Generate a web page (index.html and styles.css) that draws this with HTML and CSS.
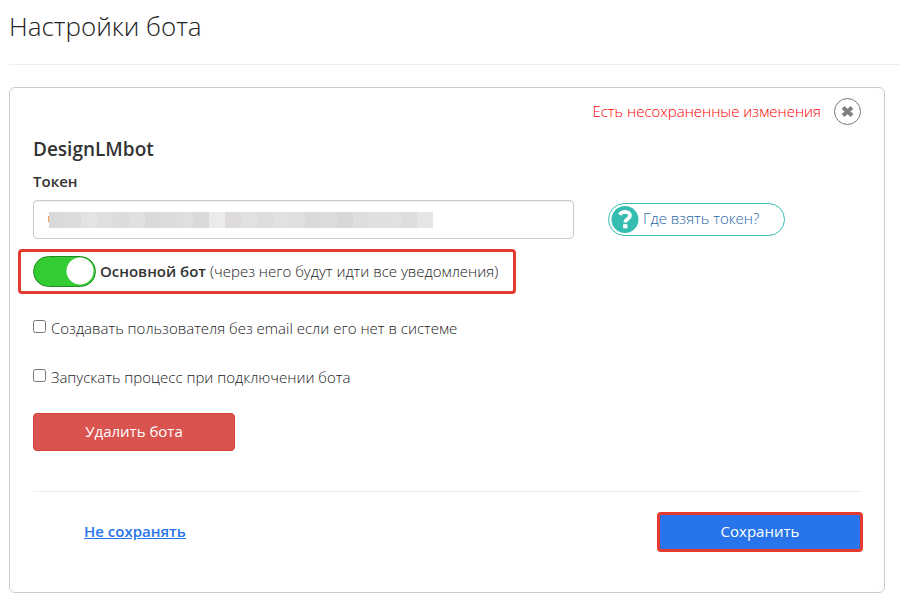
FILE: index.html
```html
<!DOCTYPE html>
<html lang="ru">
<head>
  <meta charset="UTF-8" />
  <meta name="viewport" content="width=device-width, initial-scale=1.0"/>
  <title>Настройки бота</title>
  <link rel="stylesheet" href="styles.css">
</head>
<body>
  <h1 class="page-title">Настройки бота</h1>

  <form class="card">
    <div class="card-top">
      <span class="unsaved">Есть несохраненные изменения</span>
      <button type="button" class="close" aria-label="Закрыть">
        <svg width="13" height="13" viewBox="0 0 13 13">
          <path d="M2 2.5 L11 10.5 M11 2.5 L2 10.5" stroke="#808080" stroke-width="4" fill="none"/>
        </svg>
      </button>
    </div>

    <h2 class="bot-name">DesignLMbot</h2>

    <label class="field-label" for="token">Токен</label>
    <div class="token-row">
      <input type="text" id="token" class="input-field" />
      <a href="#" class="help">
        <svg width="28" height="28" viewBox="0 0 28 28">
          <circle cx="14" cy="13.5" r="13.5" fill="#34bdb0"/>
          <path d="M8.6 8.7 C10 6.5 11.8 5.8 14 5.8 C17.2 5.8 19 7.5 19 9.7 C19 12.9 14.3 12.7 14.3 16.5" stroke="#fff" stroke-width="3.8" fill="none"/>
          <rect x="12.2" y="18.2" width="4.2" height="4.2" fill="#fff"/>
        </svg>
        <span class="help-text">Где взять токен?</span>
      </a>
    </div>

    <div class="main-bot">
      <input type="checkbox" id="mainBot" class="toggle" checked />
      <label for="mainBot"><b>Основной бот</b> (через него будут идти все уведомления)</label>
    </div>

    <div class="checks">
      <div class="check-row">
        <input type="checkbox" id="createUser" class="check" />
        <label for="createUser">Создавать пользователя без email если его нет в системе</label>
      </div>
      <div class="check-row">
        <input type="checkbox" id="startProcess" class="check" />
        <label for="startProcess">Запускать процесс при подключении бота</label>
      </div>
    </div>

    <button type="button" class="button button-delete">Удалить бота</button>

    <div class="card-footer">
      <a href="#" class="cancel">Не сохранять</a>
      <button type="submit" class="button button-save">Сохранить</button>
    </div>
  </form>
</body>
</html>
```
FILE: styles.css
```css
* {
  box-sizing: border-box;
}

body {
  font-family: "Open Sans", "Noto Sans", sans-serif;
  font-size: 15px;
  font-weight: 300;
  line-height: 20px;
  color: #222;
  background-color: #fff;
  margin: 0;
  padding: 8px 0 9px 9px;
}

.page-title {
  margin: 0 0 22px;
  padding-bottom: 20px;
  border-bottom: 1px solid #eee;
  font-size: 26px;
  font-weight: 300;
  line-height: 36px;
}

.card {
  margin-right: 15px;
  padding: 10px 23px 40px;
  border: 1px solid #ccc;
  border-radius: 6px;
}

.card-top {
  display: flex;
  justify-content: flex-end;
  align-items: center;
  gap: 13px;
}

.unsaved {
  padding-bottom: 2px;
  color: #f00;
}

.close {
  display: flex;
  align-items: center;
  justify-content: center;
  width: 27px;
  height: 27px;
  padding: 0;
  border: 1px solid #777;
  border-radius: 50%;
  background: #fff;
  cursor: pointer;
}

.bot-name {
  margin: 12px 0 10px;
  color: #333;
  font-size: 19px;
  font-weight: 600;
  line-height: 24px;
}

.field-label {
  display: block;
  margin-bottom: 9px;
  color: #333;
  font-weight: 600;
}

.token-row {
  display: flex;
  align-items: center;
  gap: 34px;
}

/* the token itself is masked with grey blocks */
.input-field {
  flex: 0 1 541px;
  min-width: 0;
  height: 39px;
  padding: 6px 12px;
  border: 1px solid #ccc;
  border-radius: 4px;
  box-shadow: inset 0 1px 1px rgba(0, 0, 0, 0.08);
  background:
    linear-gradient(#f2a44a, #f2a44a) 14px 15px / 1px 6px no-repeat,
    linear-gradient(to right,
      #d8d9db 0 16px, #dddcda 0 32px, #e3e3e3 0 48px, #dfdfdf 0 64px,
      #dcdcdc 0 80px, #e0e0e0 0 96px, #d7dad9 0 112px, #dcdcdc 0 128px,
      #dfdfdf 0 144px, #d9d9d9 0 160px, #ebebeb 0 176px, #dfdbda 0 192px,
      #dfe1e3 0 208px, #dddddd 0 224px, #e1e1e1 0 240px, #dde0df 0 256px,
      #d9d9d9 0 272px, #dcdcda 0 288px, #d9d7d5 0 304px, #dedede 0 320px,
      #e0e0e0 0 336px, #e1e1e1 0 352px, #dddddd 0 368px, #e6e6e4 0 384px
    ) 15px 11px / 384px 16px no-repeat;
}

.help {
  display: flex;
  align-items: center;
  gap: 4px;
  height: 33px;
  padding: 0 25px 0 2px;
  border: 1px solid #34bdb0;
  border-radius: 17px;
  color: #1f68a8;
  text-decoration: none;
  white-space: nowrap;
}

.help svg {
  flex: none;
}

.help-text {
  padding-bottom: 3px;
}

.main-bot {
  display: flex;
  align-items: center;
  gap: 4px;
  width: fit-content;
  height: 45px;
  margin: 10px 0 24px -15px;
  padding: 0 15px 0 12px;
  border: 3px solid #e53a30;
  border-radius: 4px;
}

.main-bot label {
  padding-bottom: 2px;
}

.main-bot b {
  color: #333;
  font-weight: 600;
}

.toggle {
  appearance: none;
  flex: none;
  width: 63px;
  height: 31px;
  margin: 0;
  border: 1px solid #1f8a1f;
  border-radius: 16px;
  background: radial-gradient(circle at 46px 14px, #fff 13px, #3c3 14px);
  cursor: pointer;
}

.checks {
  display: flex;
  flex-direction: column;
  gap: 29px;
  margin-bottom: 26px;
}

.check-row {
  display: flex;
  align-items: center;
  gap: 5px;
}

.check {
  width: 13px;
  height: 13px;
  margin: 0 0 3px;
}

.button {
  display: block;
  height: 38px;
  padding-bottom: 3px;
  border-radius: 4px;
  color: #fff;
  font-family: inherit;
  font-size: 15px;
  font-weight: 400;
  cursor: pointer;
}

.button-delete {
  width: 202px;
  border: 1px solid #d43f3a;
  background-color: #d9534f;
}

.card-footer {
  display: flex;
  align-items: center;
  justify-content: space-between;
  margin-top: 40px;
  padding: 20px 0 0 51px;
  border-top: 1px solid #eee;
}

.cancel {
  padding-bottom: 2px;
  color: #2875eb;
  font-weight: 600;
}

.button-save {
  width: 206px;
  height: 40px;
  margin-right: -2px;
  border: 3px solid #e53a30;
  background-color: #2875eb;
}
```
